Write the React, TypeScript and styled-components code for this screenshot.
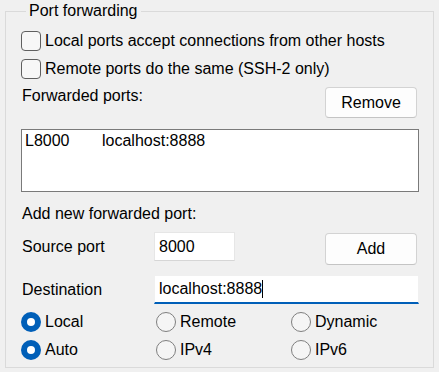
import styled, { createGlobalStyle } from "styled-components";

const GlobalStyle = createGlobalStyle`
  html, body {
    margin: 0;
    padding: 0;
    background: #f0f0f0;
  }
  body {
    font-family: "Liberation Sans", Arial, sans-serif;
    font-size: 16px;
    color: #000;
  }
`;

const Page = styled.div`
  width: 439px;
  height: 372px;
  padding: 2px 5px 0 5px;
  box-sizing: border-box;
`;

const Group = styled.fieldset`
  margin: 0;
  padding: 7px 14px 3px 15px;
  border: 1px solid #dadada;
  min-width: 0;
`;

const Legend = styled.legend`
  margin-left: 5px;
  padding: 0 3px;
  line-height: 18px;
`;

const CheckRow = styled.label`
  display: flex;
  align-items: center;
  gap: 4px;
  height: 28px;
`;

const CheckBox = styled.span`
  width: 20px;
  height: 20px;
  box-sizing: border-box;
  border: 1px solid #5f5f5f;
  border-radius: 4px;
  background: #f7f7f7;
  flex: none;
`;

const HeaderRow = styled.div`
  display: flex;
  justify-content: space-between;
  align-items: flex-start;
  margin-top: 4px;
  padding-right: 2px;
`;

const Caption = styled.div<{ $top?: number }>`
  line-height: 18px;
  margin-top: ${(p) => p.$top ?? 0}px;
  padding-left: 1px;
`;

const Button = styled.button<{ $top?: number }>`
  width: 92px;
  height: ${(p) => (p.$top ? 32 : 31)}px;
  margin-top: ${(p) => p.$top ?? 0}px;
  font: inherit;
  color: #000;
  background: #fdfdfd;
  border: 1px solid #d3d3d3;
  border-bottom-color: #c4c4c4;
  border-radius: 4px;
  padding: 0;
  flex: none;
`;

const ListBox = styled.div`
  margin-top: 11px;
  height: 63px;
  box-sizing: border-box;
  border: 1px solid #7a7a7a;
  background: #fff;
  padding: 1px 3px;
  line-height: 20px;
`;

const ListItem = styled.div`
  display: flex;
`;

const ListCell = styled.span<{ $width?: number }>`
  width: ${(p) => (p.$width ? `${p.$width}px` : "auto")};
`;

const FieldRow = styled.div<{ $top: number }>`
  display: flex;
  align-items: flex-start;
  margin-top: ${(p) => p.$top}px;
`;

const FieldLabel = styled.span`
  width: 132px;
  padding-left: 1px;
  line-height: 29px;
  flex: none;
`;

const TextBox = styled.div<{ $width?: number; $focused?: boolean }>`
  display: flex;
  align-items: center;
  height: 29px;
  box-sizing: border-box;
  width: ${(p) => (p.$width ? `${p.$width}px` : "auto")};
  flex: ${(p) => (p.$width ? "none" : "1")};
  background: #fff;
  border: 1px solid ${(p) => (p.$focused ? "#f0f0f0" : "#e6e6e6")};
  border-bottom: ${(p) => (p.$focused ? "2px solid #005fb8" : "1px solid #d6d6d6")};
  padding-left: 4px;
`;

const Caret = styled.span`
  display: inline-block;
  width: 1px;
  height: 18px;
  background: #000;
`;

const ButtonSlot = styled.div`
  flex: 1;
  display: flex;
  justify-content: flex-end;
  padding-right: 2px;
`;

const RadioGrid = styled.div`
  display: grid;
  grid-template-columns: 135px 135px 1fr;
  grid-auto-rows: 28px;
  margin-top: 4px;
`;

const RadioOption = styled.label`
  display: flex;
  align-items: center;
  gap: 4px;
`;

const RadioDot = styled.span<{ $checked?: boolean }>`
  width: 20px;
  height: 20px;
  box-sizing: border-box;
  border-radius: 50%;
  flex: none;
  background: ${(p) => (p.$checked ? "#fff" : "#f5f5f5")};
  border: ${(p) => (p.$checked ? "6px solid #005fb8" : "1px solid #7f7f7f")};
`;

const radios: { label: string; checked?: boolean }[] = [
  { label: "Local", checked: true },
  { label: "Remote" },
  { label: "Dynamic" },
  { label: "Auto", checked: true },
  { label: "IPv4" },
  { label: "IPv6" },
];

export default function App() {
  return (
    <Page>
      <GlobalStyle />
      <Group>
        <Legend>Port forwarding</Legend>
        <CheckRow>
          <CheckBox />
          Local ports accept connections from other hosts
        </CheckRow>
        <CheckRow>
          <CheckBox />
          Remote ports do the same (SSH-2 only)
        </CheckRow>
        <HeaderRow>
          <Caption>Forwarded ports:</Caption>
          <Button>Remove</Button>
        </HeaderRow>
        <ListBox>
          <ListItem>
            <ListCell $width={77}>L8000</ListCell>
            <ListCell>localhost:8888</ListCell>
          </ListItem>
        </ListBox>
        <Caption $top={13}>Add new forwarded port:</Caption>
        <FieldRow $top={9}>
          <FieldLabel>Source port</FieldLabel>
          <TextBox $width={81}>8000</TextBox>
          <ButtonSlot>
            <Button $top={1}>Add</Button>
          </ButtonSlot>
        </FieldRow>
        <FieldRow $top={10}>
          <FieldLabel>Destination</FieldLabel>
          <TextBox $focused>
            localhost:8888
            <Caret />
          </TextBox>
        </FieldRow>
        <RadioGrid>
          {radios.map((r) => (
            <RadioOption key={r.label}>
              <RadioDot $checked={r.checked} />
              {r.label}
            </RadioOption>
          ))}
        </RadioGrid>
      </Group>
    </Page>
  );
}
